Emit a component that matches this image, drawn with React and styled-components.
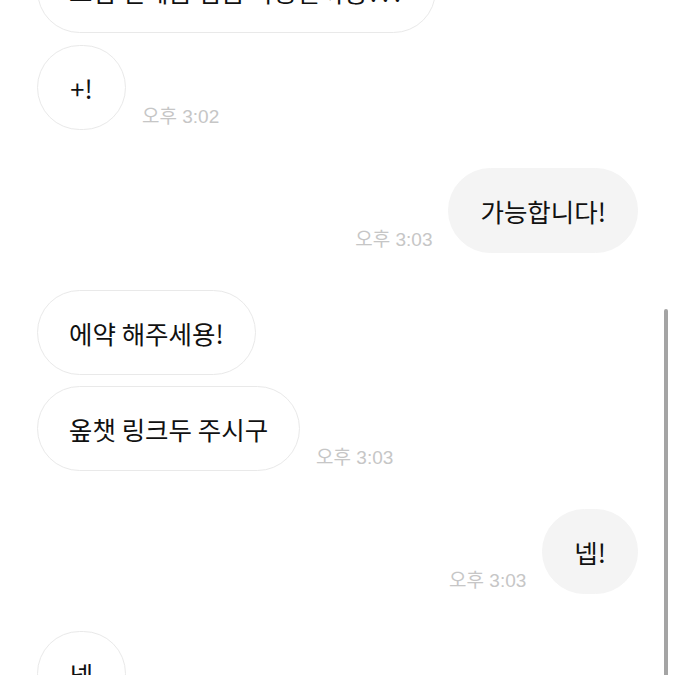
import React from "react";
import styled, { createGlobalStyle } from "styled-components";

const GlobalStyle = createGlobalStyle`
  html, body {
    margin: 0;
    padding: 0;
    background: #ffffff;
    overflow: hidden;
  }
  body {
    font-family: "Noto Sans CJK KR", "Noto Sans", sans-serif;
  }
`;

const messages = [
  { id: 1, mine: false, text: "그럼 언제쯤 입금 가능할까용???", gap: 0 },
  { id: 2, mine: false, text: "+!", time: "오후 3:02", gap: 12 },
  { id: 3, mine: true, text: "가능합니다!", time: "오후 3:03", gap: 38 },
  { id: 4, mine: false, text: "에약 해주세용!", gap: 37 },
  { id: 5, mine: false, text: "옾챗 링크두 주시구", time: "오후 3:03", gap: 11 },
  { id: 6, mine: true, text: "넵!", time: "오후 3:03", gap: 38 },
  { id: 7, mine: false, text: "넵", gap: 37 },
];

const App = () => {
  return (
    <>
      <GlobalStyle />
      <Screen>
        <ChatList>
          {messages.map((m) => (
            <Row key={m.id} $mine={m.mine} $gap={m.gap}>
              <Bubble $mine={m.mine}>{m.text}</Bubble>
              {m.time && <Time>{m.time}</Time>}
            </Row>
          ))}
        </ChatList>
        <ScrollThumb />
      </Screen>
    </>
  );
};

export default App;

const Screen = styled.div`
  position: relative;
  width: 675px;
  height: 675px;
  overflow: hidden;
  background: #fff;
`;

const ChatList = styled.div`
  display: flex;
  flex-direction: column;
  padding: 0 37px;
  margin-top: -52px;
`;

const Row = styled.div`
  display: flex;
  flex-direction: ${(p) => (p.$mine ? "row-reverse" : "row")};
  align-items: flex-end;
  gap: 16px;
  margin-top: ${(p) => p.$gap}px;
`;

const Bubble = styled.div`
  box-sizing: border-box;
  height: 85px;
  min-width: 89px;
  padding: 0 31px;
  display: flex;
  align-items: center;
  justify-content: center;
  border-radius: 43px;
  font-size: 25.5px;
  color: #111;
  white-space: nowrap;
  background: ${(p) => (p.$mine ? "#f4f4f4" : "#fff")};
  border: 1.5px solid ${(p) => (p.$mine ? "#f4f4f4" : "#e9e9e9")};
`;

const Time = styled.span`
  font-family: "Liberation Sans", "Noto Sans CJK KR", sans-serif;
  font-size: 19px;
  color: #c6c6c6;
  line-height: 1;
  margin-bottom: 4px;
  white-space: nowrap;
`;

const ScrollThumb = styled.div`
  position: absolute;
  right: 7px;
  top: 309px;
  width: 4px;
  height: 380px;
  border-radius: 2px;
  background: #a4a4a4;
`;
